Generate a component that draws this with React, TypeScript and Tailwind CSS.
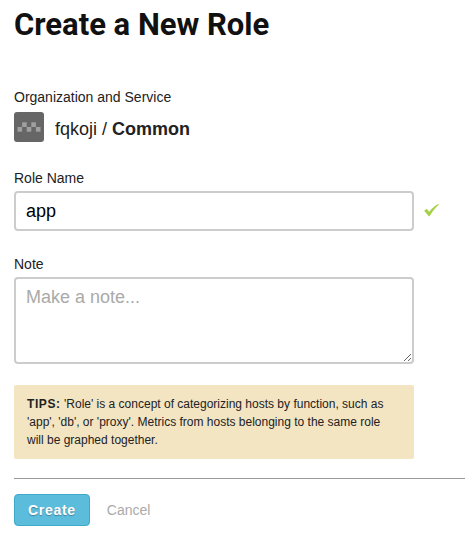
const fieldClass =
  "block w-full rounded-sm border-2 border-[#cccccc] bg-white px-[10px] text-lg text-black placeholder:text-[#aaaaaa] outline-none focus:border-[#5bbcdb]";

function ServiceIcon() {
  return (
    <svg width="30" height="30" viewBox="0 0 30 30" className="shrink-0" aria-hidden="true">
      <rect width="30" height="30" rx="3" fill="#666666" />
      <g fill="#a0a0a0">
        <rect x="3.5" y="15" width="4.6" height="4.7" />
        <rect x="8.1" y="10.3" width="4.6" height="4.7" />
        <rect x="12.7" y="15" width="4.6" height="4.7" />
        <rect x="17.3" y="10.3" width="4.6" height="4.7" />
        <rect x="21.9" y="15" width="4.6" height="4.7" />
      </g>
    </svg>
  );
}

function CheckIcon() {
  return (
    <svg width="16" height="14" viewBox="0 0 16 14" className="shrink-0" role="img" aria-label="Valid">
      <path d="M0.2 7.8 L2.6 5.8 L5.2 8.8 C7.6 5.6 10.6 3 14.2 1 L14.8 1.8 C11.2 5 8.2 8.6 5.6 13.2 L4.8 13.2 Z" fill="#a5d149" />
    </svg>
  );
}

export default function App() {
  return (
    <main className="bg-white pt-2 pb-3 pl-[14px] font-['Liberation_Sans',Arial,sans-serif] text-[#222222]">
      <h1 className="font-[Roboto,sans-serif] text-[31px] leading-[34px] font-bold text-[#111111]">
        Create a New Role
      </h1>

      <form className="mt-[46px]" onSubmit={(e) => e.preventDefault()}>
        <div className="mr-[51px] max-w-[400px]">
          <p className="text-sm leading-[18px]">Organization and Service</p>
          <div className="mt-[6px] flex items-center gap-[11px]">
            <ServiceIcon />
            <p className="pt-1 text-lg leading-6">
              fqkoji / <strong>Common</strong>
            </p>
          </div>

          <label htmlFor="role-name" className="mt-[27px] block text-sm leading-[18px]">
            Role Name
          </label>
          <div className="relative mt-1">
            <input id="role-name" type="text" defaultValue="app" className={`${fieldClass} h-10`} />
            <span className="absolute top-3 left-full ml-[10px]">
              <CheckIcon />
            </span>
          </div>

          <label htmlFor="note" className="mt-6 block text-sm leading-[18px]">
            Note
          </label>
          <textarea
            id="note"
            placeholder="Make a note..."
            className={`${fieldClass} mt-1 h-[87px] resize py-[6px] leading-6`}
          />

          <p className="mt-[21px] rounded-xs bg-[#f3e4c2] py-[10px] pr-5 pl-[13px] text-xs leading-[18px]">
            <strong className="tracking-wider">TIPS:</strong> 'Role' is a concept of categorizing hosts by function,
            such as 'app', 'db', or 'proxy'. Metrics from hosts belonging to the same role will be graphed together.
          </p>
        </div>

        <div className="mt-[19px] flex items-center gap-[17px] border-t border-[#999999] pt-[15px]">
          <button
            type="submit"
            className="h-8 rounded-sm border border-[#3fa9c9] bg-[#5bbcdb] px-[13px] text-sm font-bold tracking-wider text-white text-shadow-[0_1px_1px_rgb(0_0_0/0.3)]"
          >
            Create
          </button>
          <a href="#" className="text-sm text-[#aaaaaa]">
            Cancel
          </a>
        </div>
      </form>
    </main>
  );
}
